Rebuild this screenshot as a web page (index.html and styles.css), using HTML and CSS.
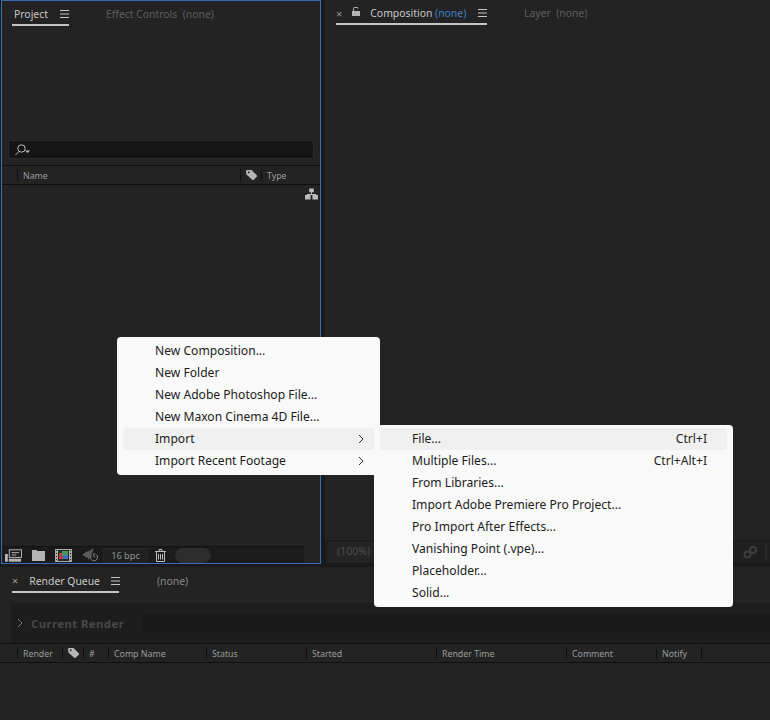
FILE: index.html
```html
<!DOCTYPE html>
<html lang="en">
<head>
<meta charset="utf-8">
<title>After Effects - Import menu</title>
<link rel="stylesheet" href="styles.css">
</head>
<body>
<div class="app">
  <div class="top">
    <section class="project">
      <div class="tabs project-tabs">
        <div class="tab tab-project"><span>Project</span>
          <svg class="burger" viewBox="0 0 9 8"><path d="M0 .5h9M0 4h9M0 7.5h9"/></svg>
        </div>
        <span class="tab-dim effect">Effect Controls&nbsp; (none)</span>
      </div>
      <div class="thumb"></div>
      <div class="search">
        <svg class="search-ico" viewBox="0 0 18 12"><circle cx="7.5" cy="4.5" r="3.7"/><path d="M5 7.5 1.5 11"/><path class="fill" d="M11 6.5h5l-2.5 2.5z"/></svg>
      </div>
      <div class="cols project-cols">
        <span class="col">Name</span>
        <span class="col col-tag"><svg class="tag" viewBox="0 0 14 13"><path d="M1 1.500 2 1h5l6 6v1l-4 4H8L1.500 6z"/><circle class="hole" cx="4" cy="3.500" r="1"/></svg></span>
        <span class="col">Type</span>
      </div>
      <div class="list">
        <svg class="flow" viewBox="0 0 14 12"><path d="M4.500 0h5v4h-5zM6.500 4h1v2h4.500v1h-10V6h4.500zM0 7h6v5H0zM8 7h6v5H8z"/></svg>
      </div>
      <div class="footer">
        <svg class="f-ico f-interpret" viewBox="0 0 18 13"><path class="fill" d="M0 5h3v8H0zM4 10h13v3H4z"/><rect class="line" x="4.500" y=".5" width="13" height="8"/><path class="line" d="M7 3.500h8M7 6h5"/></svg>
        <svg class="f-ico f-folder" viewBox="0 0 13 11"><path class="fill" d="M0 0h5v1h8v10H0z"/></svg>
        <svg class="f-ico f-comp" viewBox="0 0 17 13"><rect class="film" width="17" height="13"/><path class="holes" d="M1 1h1v1H1zM1 4h1v1H1zM1 7h1v1H1zM1 10h1v1H1zM15 1h1v1h-1zM15 4h1v1h-1zM15 7h1v1h-1zM15 10h1v1h-1z"/><rect x="3" y="1" width="11" height="11" fill="#2b2b2b"/><rect x="4" y="4" width="5" height="6" fill="#c0423c"/><rect x="7" y="2" width="6" height="5" fill="#3f9a5c"/><rect x="8" y="6" width="5" height="4" fill="#3b74c4"/></svg>
        <svg class="f-ico f-render" viewBox="0 0 17 14"><path class="dim" d="M0 7 4 4 7 3 12 0 10 5 8 8 7 12 5 9 3 10 3 8z"/><path class="dimline" d="M10 6.500a3.500 3.500 0 1 0 4 0M12 5v4.500"/></svg>
        <span class="bpc">16 bpc</span>
        <svg class="f-ico f-trash" viewBox="0 0 11 13"><path class="line" d="M0 2.500h11M4 2.500V.5h3v2M1.500 2.500v10h8v-10M3.500 5v5.500M5.500 5v5.500M7.500 5v5.500"/></svg>
        <span class="pill"></span>
      </div>
    </section>
    <section class="comp">
      <div class="tabs comp-tabs">
        <div class="tab tab-comp">
          <span class="close">×</span>
          <svg class="lock" viewBox="0 0 8 9"><path d="M0 4h8v5H0z"/><path class="shackle" d="M1.500 4V1.500q0-1 1-1h2.500q1 0 1 1"/></svg>
          <span class="comp-name">Composition <em>(none)</em></span>
          <svg class="burger" viewBox="0 0 9 8"><path d="M0 .5h9M0 4h9M0 7.500h9"/></svg>
        </div>
        <span class="tab-dim layer">Layer&nbsp; (none)</span>
      </div>
      <div class="viewer"></div>
      <div class="comp-bar">
        <span class="zoom-box">(100%)</span>
        <svg class="link" viewBox="0 0 15 13"><circle cx="4.500" cy="8.500" r="3"/><circle cx="10" cy="4" r="3"/></svg>
        <span class="bar-sep"></span>
      </div>
    </section>
  </div>
  <section class="queue">
    <div class="tabs queue-tabs">
      <div class="tab tab-queue">
        <span class="close">×</span>
        <span class="queue-name">Render Queue</span>
        <svg class="burger" viewBox="0 0 9 8"><path d="M0 .5h9M0 4h9M0 7.500h9"/></svg>
      </div>
      <span class="queue-none">(none)</span>
    </div>
    <div class="current">
      <svg class="chev" viewBox="0 0 6 10"><path d="M1 1l4 4-4 4"/></svg>
      <span class="current-label">Current Render</span>
      <span class="progress"></span>
    </div>
    <div class="cols queue-cols">
      <span class="col">Render</span>
      <span class="col col-tag"><svg class="tag" viewBox="0 0 14 13"><path d="M1 1.500 2 1h5l6 6v1l-4 4H8L1.500 6z"/><circle class="hole" cx="4" cy="3.500" r="1"/></svg></span>
      <span class="col">#</span>
      <span class="col">Comp Name</span>
      <span class="col">Status</span>
      <span class="col">Started</span>
      <span class="col">Render Time</span>
      <span class="col">Comment</span>
      <span class="col">Notify</span>
      <span class="col"></span>
    </div>
  </section>
</div>

<ul class="menu menu-main">
  <li>New Composition...</li>
  <li>New Folder</li>
  <li>New Adobe Photoshop File...</li>
  <li>New Maxon Cinema 4D File...</li>
  <li class="active">Import<svg class="arrow" viewBox="0 0 6 10"><path d="M1 1l4 4-4 4"/></svg></li>
  <li>Import Recent Footage<svg class="arrow" viewBox="0 0 6 10"><path d="M1 1l4 4-4 4"/></svg></li>
</ul>
<ul class="menu menu-sub">
  <li class="active">File...<span class="key">Ctrl+I</span></li>
  <li>Multiple Files...<span class="key">Ctrl+Alt+I</span></li>
  <li>From Libraries...</li>
  <li>Import Adobe Premiere Pro Project...</li>
  <li>Pro Import After Effects...</li>
  <li>Vanishing Point (.vpe)...</li>
  <li>Placeholder...</li>
  <li>Solid...</li>
</ul>
</body>
</html>
```
FILE: styles.css
```css
* { box-sizing: border-box; }
html, body { margin: 0; height: 100%; }
body {
  background: #1a1a1a;
  font-family: "Noto Sans", "Open Sans", sans-serif;
  overflow: hidden;
  position: relative;
  width: 770px;
  height: 720px;
}
svg { display: block; flex: none; }
.app { display: flex; flex-direction: column; height: 720px; }
.top { display: flex; height: 564px; gap: 4px; }

.project {
  width: 320px;
  margin-left: 1px;
  background: #232323;
  border: 1px solid #3470b0;
  display: flex;
  flex-direction: column;
}
.comp {
  flex: 1;
  background: #232323;
  display: flex;
  flex-direction: column;
  margin-bottom: 1px;
}

.tabs { display: flex; height: 26px; flex: none; align-items: flex-start; font-size: 10.400px; color: #c9c9c9; }
.tab { display: flex; align-items: center; height: 25px; border-bottom: 2px solid #c4c4c4; padding-top: 2px; }
.burger { width: 9px; height: 8px; fill: none; stroke: #c4c4c4; stroke-width: 1; }
.close { color: #9a9a9a; font-size: 11px; line-height: 1; }
.tab-dim { color: #5f5f5f; padding-top: 6px; line-height: 15px; white-space: nowrap; }

.project-tabs { padding-left: 10px; }
.tab-project { width: 57px; padding-left: 2px; gap: 12px; }
.effect { margin-left: 37px; }
.thumb { height: 113px; flex: none; }

.search {
  height: 19px;
  margin: 0 6px 6px 6px;
  background: #151515;
  border: 1px solid #2b2b2b;
  border-radius: 2px;
  display: flex;
  align-items: center;
  padding-left: 5px;
  flex: none;
}
.search-ico { width: 18px; height: 12px; fill: none; stroke: #bdbdbd; stroke-width: 1; }
.search-ico .fill { fill: #bdbdbd; stroke: none; }

.cols {
  display: grid;
  height: 20px;
  flex: none;
  align-items: center;
  border-top: 1px solid #0e0e0e;
  border-bottom: 1px solid #0e0e0e;
  font-size: 8.800px;
  color: #9c9c9c;
}
.col { height: 12px; border-left: 1px solid #0f0f0f; padding-left: 5px; line-height: 14px; white-space: nowrap; }
.col-tag { padding-left: 4px; }
.tag { width: 13px; height: 12px; fill: #b5b5b5; }
.tag .hole { fill: #232323; }
.project-cols { grid-template-columns: 223px 21px 1fr; padding-left: 15px; }

.list { flex: 1; display: flex; justify-content: flex-end; padding: 3px 2px 0 0; }
.flow { width: 13px; height: 12px; fill: #bcbcbc; }

.footer {
  height: 17px;
  flex: none;
  background: #1b1b1b;
  margin-right: 16px;
  display: flex;
  align-items: center;
  padding-left: 3px;
  border-top: 1px solid #121212;
}
.f-ico { height: 13px; }
.f-interpret { width: 17px; }
.f-folder { width: 13px; height: 11px; margin-left: 10px; }
.f-comp { width: 17px; margin-left: 10px; }
.f-render { width: 17px; height: 14px; margin-left: 10px; }
.f-trash { width: 11px; margin-left: 7px; }
.fill { fill: #b4b4b4; }
.line { fill: none; stroke: #bcbcbc; stroke-width: 1; }
.film { fill: #a8a8a8; }
.holes { fill: #2b2b2b; }
.dim { fill: #5b5b5b; }
.dimline { fill: none; stroke: #8a8a8a; stroke-width: 1; }
.bpc {
  margin-left: 4px;
  width: 45px;
  height: 15px;
  background: #202020;
  border: 1px solid #262626;
  color: #8e8e8e;
  font-size: 9.200px;
  line-height: 13px;
  text-align: center;
}
.pill { margin-left: 9px; width: 36px; height: 15px; border-radius: 8px; background: #2d2d2d; }

.comp-tabs { padding-left: 11px; }
.tab-comp { width: 151px; padding-top: 3px; }
.lock { width: 8px; height: 9px; fill: #b5b5b5; margin: -4px 0 0 10px; }
.lock .shackle { fill: none; stroke: #b5b5b5; stroke-width: 1; }
.comp-name { margin-left: 10px; white-space: nowrap; color: #c9c9c9; }
.comp-name em { font-style: normal; color: #3f7fc9; }
.tab-comp .burger { margin-left: 12px; }
.layer { margin-left: 37px; }
.viewer { flex: 1; }

.comp-bar {
  height: 23px;
  flex: none;
  background: #1f1f1f;
  display: flex;
  align-items: center;
  padding-left: 3px;
  border-top: 1px solid #1a1a1a;
}
.zoom-box { background: #242424; height: 20px; width: 50px; padding-left: 9px; color: #4d4d4d; font-size: 10.500px; line-height: 19px; }
.link { width: 15px; height: 13px; fill: none; stroke: #3e3e3e; stroke-width: 2; margin-left: auto; }
.bar-sep { width: 2px; height: 14px; background: #2c2c2c; margin: 0 3px 0 7px; }

.queue { flex: 1; margin-top: 3px; background: #232323; display: flex; flex-direction: column; }
.queue-tabs { padding-left: 12px; height: 36px; }
.tab-queue { width: 107px; height: 26px; padding-top: 3px; }
.queue-name { margin-left: 11px; white-space: nowrap; color: #c9c9c9; }
.tab-queue .burger { margin-left: 11px; }
.queue-none { margin-left: 38px; padding-top: 7px; line-height: 15px; color: #8a8a8a; }
.current {
  margin-left: 10px;
  height: 40px;
  flex: none;
  background: #1d1d1d;
  border-radius: 4px 0 0 0;
  display: flex;
  align-items: center;
  padding-left: 7px;
}
.chev { width: 6px; height: 10px; fill: none; stroke: #777; stroke-width: 1; }
.current-label { margin-left: 8px; font-size: 11.400px; font-weight: 700; color: #484848; white-space: nowrap; letter-spacing: .4px; }
.progress { margin-left: 17px; flex: 1; height: 18px; background: #191919; border-radius: 8px 0 0 8px; }
.queue-cols {
  grid-template-columns: 45px 21px 25px 98px 100px 130px 130px 90px 45px 1fr;
  padding-left: 17px;
}
.queue-cols .tag .hole { fill: #232323; }

.menu {
  position: absolute;
  margin: 0;
  padding: 3px 5px;
  list-style: none;
  background: #f9f9f9;
  border-radius: 4px;
  font-size: 12.100px;
  color: #1b1b1b;
}
.menu li {
  height: 22px;
  line-height: 22px;
  border-radius: 3px;
  position: relative;
  display: flex;
  align-items: center;
  justify-content: space-between;
  white-space: nowrap;
}
.menu .active { background: #f0f0f0; }
.menu-main { left: 117px; top: 337px; width: 263px; padding-left: 6px; }
.menu-main li { padding: 0 11px 0 32px; }
.menu-sub { left: 374px; top: 425px; width: 359px; padding-left: 6px; padding-right: 6px; }
.menu-sub li { padding: 0 20px 0 32px; }
.arrow { width: 6px; height: 10px; fill: none; stroke: #333; stroke-width: 1; }
.key { color: #222; }
```
